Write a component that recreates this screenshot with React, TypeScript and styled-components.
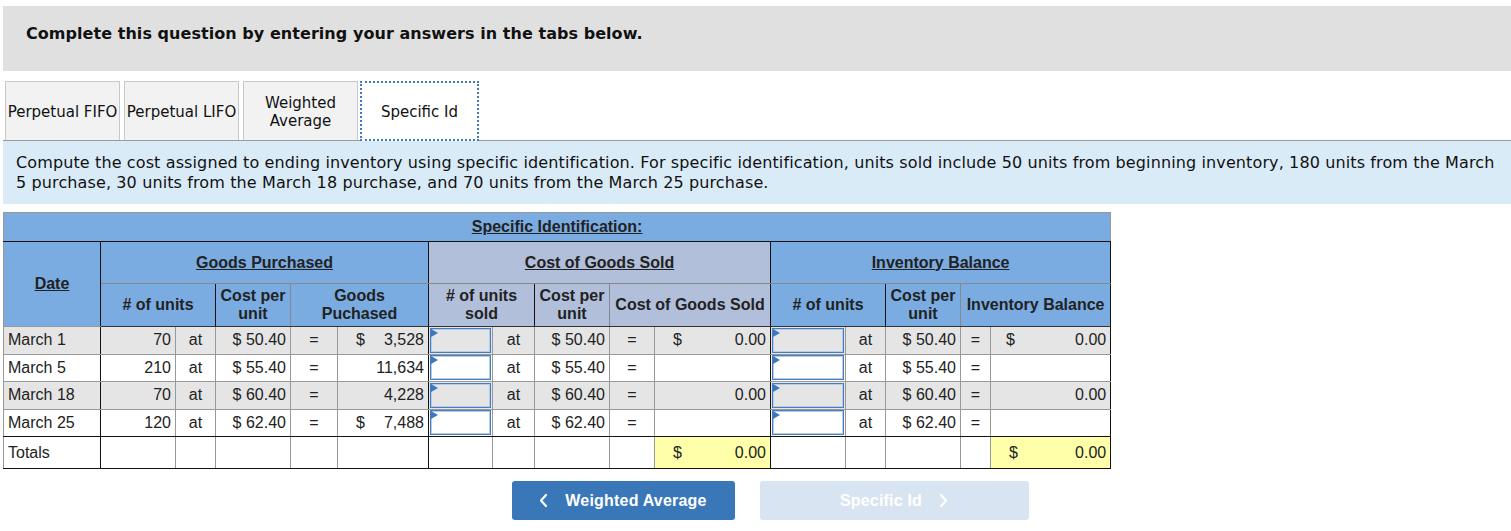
import React from 'react'
import styled, { createGlobalStyle, css } from 'styled-components'

const GlobalStyle = createGlobalStyle`
  html, body {
    margin: 0;
    padding: 0;
    background: #ffffff;
  }
  body {
    font-family: "DejaVu Sans", Verdana, sans-serif;
    color: #111;
  }
`

const Page = styled.div`
  padding: 6px 0 0 3px;
  width: 1508px;
`
const QuestionBar = styled.div`
  height: 65px;
  box-sizing: border-box;
  background: #e0e0e0;
  padding: 18px 0 0 23px;
  font-size: 16px;
  line-height: 20px;
  font-weight: 700;
  letter-spacing: 0.05px;
  color: #111;
`
const TabRow = styled.div`
  margin-top: 10px;
  display: flex;
  align-items: stretch;
  gap: 4px;
  padding-left: 2px;
  height: 59px;
  border-bottom: 1px solid #9a9a9a;
`
const Tab = styled.div<{ $active?: boolean }>`
  width: 115px;
  box-sizing: border-box;
  display: flex;
  align-items: center;
  justify-content: center;
  text-align: center;
  font-size: 15px;
  line-height: 18px;
  padding-top: 2px;
  white-space: nowrap;
  color: #111;
  background: #f2f2f2;
  border: 1px solid #c8c8c8;
  border-bottom: none;
  ${(p) =>
    p.$active &&
    css`
      width: 119px;
      margin-left: -2px;
      background: #ffffff;
      border: 2px dotted #3f79bf;
      margin-bottom: -1px;
    `}
`
const Instructions = styled.div`
  background: #daebf8;
  padding: 12px 6px 11px 13px;
  font-size: 16px;
  line-height: 20px;
  letter-spacing: 0.12px;
  color: #111;
`

const Grid = styled.table`
  margin-top: 8px;
  border-collapse: collapse;
  table-layout: fixed;
  width: 1107px;
  font-family: "Liberation Sans", Arial, sans-serif;
  font-size: 16px;
  color: #222;
  border: 1px solid #999;
`
const TitleCell = styled.th`
  height: 29px;
  padding: 0;
  background: #7aace2;
  text-align: center;
  font-weight: 700;
  text-decoration: underline;
  border-bottom: 1px solid #111;
  vertical-align: top;
  padding-top: 5px;
  box-sizing: border-box;
`
const GroupHead = styled.th<{ $tone?: 'blue' | 'lilac' }>`
  padding: 0;
  height: 41px;
  background: ${(p) => (p.$tone === 'lilac' ? '#b1bfdb' : '#7aace2')};
  font-weight: 700;
  text-align: center;
  text-decoration: underline;
  border-left: 1px solid #111;
  border-right: 1px solid #111;
  border-bottom: 1px solid #888;
  line-height: 18px;
`
const SubHead = styled.th<{ $tone?: 'blue' | 'lilac'; $edge?: boolean }>`
  padding: 0;
  height: 42px;
  background: ${(p) => (p.$tone === 'lilac' ? '#b1bfdb' : '#7aace2')};
  font-weight: 700;
  text-align: center;
  line-height: 18px;
  border-bottom: 1px solid #333;
  border-left: 1px solid ${(p) => (p.$edge ? '#111' : '#888')};
  border-right: 1px solid ${(p) => (p.$edge ? '#111' : '#888')};
`
const Row = styled.tr<{ $shade?: boolean; $last?: boolean }>`
  background: ${(p) => (p.$shade ? '#e5e5e5' : '#ffffff')};
  height: 27.5px;
  ${(p) =>
    p.$last &&
    css`
      td {
        border-bottom: 1px solid #111;
      }
    `}
`
const TotalsRow = styled.tr`
  background: #ffffff;
  height: 32px;
  td {
    border-bottom: 1px solid #111;
  }
`
const Cell = styled.td<{ $align?: 'left' | 'right' | 'center'; $edge?: boolean; $fill?: string }>`
  padding: 0 4px;
  text-align: ${(p) => p.$align || 'left'};
  border: 1px solid #999;
  border-right-color: ${(p) => (p.$edge ? '#111' : '#999')};
  background: ${(p) => p.$fill || 'transparent'};
  white-space: nowrap;
  overflow: hidden;
  line-height: 18px;
`
const EntryCell = styled.td`
  padding: 0 1px;
  border: 1px solid #999;
  border-left-color: #111;
`
const EntryBox = styled.div<{ $shade?: boolean }>`
  position: relative;
  height: 25px;
  box-sizing: border-box;
  border: 1px solid #4a7bbd;
  box-shadow: inset 0 0 0 1px #b4cdea;
  background: ${(p) => (p.$shade ? '#e5e5e5' : '#ffffff')};
  &::before {
    content: '';
    position: absolute;
    left: 0;
    top: 0;
    border-left: 7px solid #3b78c2;
    border-top: 4px solid transparent;
    border-bottom: 4px solid transparent;
  }
`
const Amount = styled.div`
  display: flex;
  justify-content: space-between;
  align-items: center;
`
const Dollar = styled.span<{ $gap: number }>`
  padding-left: ${(p) => p.$gap}px;
`

const NavBar = styled.div`
  display: flex;
  justify-content: center;
  gap: 25px;
  margin-top: 12px;
  padding-left: 26px;
`
const NavButton = styled.div<{ $disabled?: boolean }>`
  height: 39px;
  width: ${(p) => (p.$disabled ? 269 : 223)}px;
  box-sizing: border-box;
  border-radius: 3px;
  display: flex;
  align-items: center;
  justify-content: center;
  gap: 17px;
  font-family: "Liberation Sans", Arial, sans-serif;
  font-weight: 700;
  font-size: 16px;
  letter-spacing: 0.2px;
  color: #ffffff;
  background: ${(p) => (p.$disabled ? '#d8e4f1' : '#3a77b9')};
  svg {
    display: block;
  }
`

const Chevron: React.FC<{ dir: 'left' | 'right' }> = ({ dir }) => (
  <svg width="9" height="15" viewBox="0 0 9 15">
    <polyline
      points={dir === 'left' ? '7,2 2,7.5 7,13' : '2,2 7,7.5 2,13'}
      fill="none"
      stroke="#ffffff"
      strokeWidth="2.2"
      strokeLinecap="round"
      strokeLinejoin="round"
    />
  </svg>
)

type Line = {
  date: string
  units: number
  cost: string
  purchased: string
  purchasedDollar?: boolean
  cgs: string
  cgsDollar?: boolean
  inv: string
  invDollar?: boolean
}

const lines: Line[] = [
  { date: 'March 1', units: 70, cost: '50.40', purchased: '3,528', purchasedDollar: true, cgs: '0.00', cgsDollar: true, inv: '0.00', invDollar: true },
  { date: 'March 5', units: 210, cost: '55.40', purchased: '11,634', cgs: '', inv: '' },
  { date: 'March 18', units: 70, cost: '60.40', purchased: '4,228', cgs: '0.00', inv: '0.00' },
  { date: 'March 25', units: 120, cost: '62.40', purchased: '7,488', purchasedDollar: true, cgs: '', inv: '' },
]

const widths = [97, 75, 40, 75, 47, 91, 64, 42, 75, 45, 116, 75, 40, 75, 30, 120]

const Money: React.FC<{ dollar?: boolean; value: string; gap: number }> = ({ dollar, value, gap }) => (
  <Amount>
    <Dollar $gap={gap}>{dollar ? '$' : ''}</Dollar>
    <span>{value}</span>
  </Amount>
)

export default function App() {
  return (
    <Page>
      <GlobalStyle />
      <QuestionBar>Complete this question by entering your answers in the tabs below.</QuestionBar>
      <TabRow>
        <Tab>Perpetual FIFO</Tab>
        <Tab>Perpetual LIFO</Tab>
        <Tab>
          Weighted
          <br />
          Average
        </Tab>
        <Tab $active>Specific Id</Tab>
      </TabRow>
      <Instructions>
        Compute the cost assigned to ending inventory using specific identification. For specific identification, units
        sold include 50 units from beginning inventory, 180 units from the March 5 purchase, 30 units from the March 18
        purchase, and 70 units from the March 25 purchase.
      </Instructions>
      <Grid>
        <colgroup>
          {widths.map((w, i) => (
            <col key={i} style={{ width: w }} />
          ))}
        </colgroup>
        <thead>
          <tr>
            <TitleCell colSpan={16}>Specific Identification:</TitleCell>
          </tr>
          <tr>
            <GroupHead rowSpan={2} style={{ borderLeft: '1px solid #999', borderBottom: '1px solid #999' }}>
              Date
            </GroupHead>
            <GroupHead colSpan={5}>Goods Purchased</GroupHead>
            <GroupHead colSpan={5} $tone="lilac">
              Cost of Goods Sold
            </GroupHead>
            <GroupHead colSpan={5}>Inventory Balance</GroupHead>
          </tr>
          <tr>
            <SubHead colSpan={2} $edge>
              # of units
            </SubHead>
            <SubHead>
              Cost per
              <br />
              unit
            </SubHead>
            <SubHead colSpan={2} $edge>
              Goods
              <br />
              Puchased
            </SubHead>
            <SubHead colSpan={2} $tone="lilac" $edge>
              # of units
              <br />
              sold
            </SubHead>
            <SubHead $tone="lilac">
              Cost per
              <br />
              unit
            </SubHead>
            <SubHead colSpan={2} $tone="lilac" $edge>
              Cost of Goods Sold
            </SubHead>
            <SubHead colSpan={2} $edge>
              # of units
            </SubHead>
            <SubHead>
              Cost per
              <br />
              unit
            </SubHead>
            <SubHead colSpan={2} $edge>
              Inventory Balance
            </SubHead>
          </tr>
        </thead>
        <tbody>
          {lines.map((l, i) => {
            const shade = i % 2 === 0
            return (
              <Row key={l.date} $shade={shade} $last={i === lines.length - 1}>
                <Cell $edge>{l.date}</Cell>
                <Cell $align="right">{l.units}</Cell>
                <Cell $align="center">at</Cell>
                <Cell $align="right">$ {l.cost}</Cell>
                <Cell $align="center">=</Cell>
                <Cell $edge>
                  <Money dollar={l.purchasedDollar} value={l.purchased} gap={14} />
                </Cell>
                <EntryCell>
                  <EntryBox $shade={shade} />
                </EntryCell>
                <Cell $align="center">at</Cell>
                <Cell $align="right">$ {l.cost}</Cell>
                <Cell $align="center">=</Cell>
                <Cell $edge>
                  <Money dollar={l.cgsDollar} value={l.cgs} gap={14} />
                </Cell>
                <EntryCell>
                  <EntryBox $shade={shade} />
                </EntryCell>
                <Cell $align="center">at</Cell>
                <Cell $align="right">$ {l.cost}</Cell>
                <Cell $align="center">=</Cell>
                <Cell $edge>
                  <Money dollar={l.invDollar} value={l.inv} gap={11} />
                </Cell>
              </Row>
            )
          })}
          <TotalsRow>
            <Cell $edge>Totals</Cell>
            <Cell />
            <Cell />
            <Cell />
            <Cell />
            <Cell $edge />
            <Cell style={{ borderLeftColor: '#111' }} />
            <Cell />
            <Cell />
            <Cell />
            <Cell $edge $fill="#ffffaa">
              <Money dollar value="0.00" gap={14} />
            </Cell>
            <Cell style={{ borderLeftColor: '#111' }} />
            <Cell />
            <Cell />
            <Cell />
            <Cell $edge $fill="#ffffaa">
              <Money dollar value="0.00" gap={14} />
            </Cell>
          </TotalsRow>
        </tbody>
      </Grid>
      <NavBar>
        <NavButton>
          <Chevron dir="left" />
          Weighted Average
        </NavButton>
        <NavButton $disabled>
          Specific Id
          <Chevron dir="right" />
        </NavButton>
      </NavBar>
    </Page>
  )
}
